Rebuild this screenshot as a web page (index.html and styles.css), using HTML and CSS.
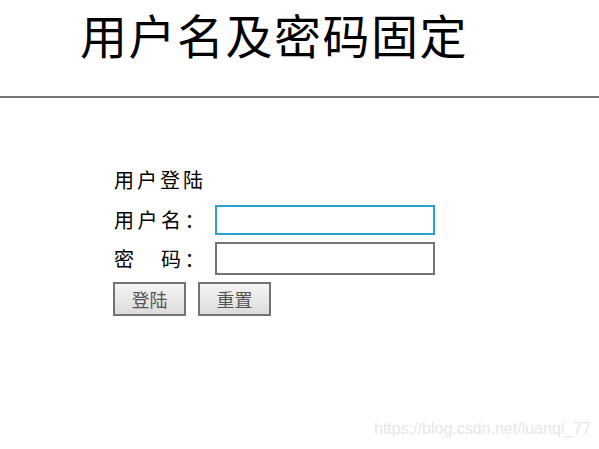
FILE: index.html
```html
<!DOCTYPE html>
<html lang="zh">
<head>
<meta charset="utf-8">
<title>用户名及密码固定</title>
<link rel="stylesheet" href="styles.css">
</head>
<body>
<header class="header">
  <h1 class="title">用户名及密码固定</h1>
</header>
<main class="login">
  <div class="login-title">用户登陆</div>
  <div class="row">
    <label class="label" for="u">用户名：</label>
    <input id="u" class="field focused" type="text">
  </div>
  <div class="row last">
    <label class="label" for="p">密　码：</label>
    <input id="p" class="field tall" type="password">
  </div>
  <div class="buttons">
    <button class="btn" type="button">登陆</button>
    <button class="btn" type="button">重置</button>
  </div>
</main>
<div class="watermark">https://blog.csdn.net/luanqi_77</div>
</body>
</html>
```

FILE: styles.css
```css
html, body {
  margin: 0;
  padding: 0;
  background: #fff;
  width: 599px;
  height: 449px;
  overflow: hidden;
  font-family: "Noto Sans CJK SC", "Liberation Serif", serif;
  color: #000;
}
.header {
  box-sizing: border-box;
  height: 98px;
  border-bottom: 2px solid #777;
}
.title {
  margin: 0;
  padding: 6px 0 0 80px;
  font-size: 47px;
  font-weight: 400;
  letter-spacing: 1.5px;
  line-height: 56px;
}
.login {
  margin: 67px 0 0 113px;
  display: flex;
  flex-direction: column;
}
.login-title {
  font-size: 20px;
  letter-spacing: 3px;
  line-height: 30px;
  height: 40px;
  padding-left: 1px;
}
.row {
  display: flex;
  align-items: center;
  margin-bottom: 7px;
}
.row.last {
  margin-bottom: 7px;
}
.label {
  width: 102px;
  font-size: 20px;
  letter-spacing: 3.5px;
  padding-left: 1px;
  box-sizing: border-box;
  line-height: 30px;
}
.field {
  width: 220px;
  height: 31px;
  box-sizing: border-box;
  border: 2px solid #747474;
  margin: 0;
  padding: 0 4px;
  outline: none;
  background: #fff;
}
.field.focused {
  border-color: #2a9fdb;
  height: 30px;
}
.field.tall {
  height: 33px;
}
.buttons {
  display: flex;
  gap: 12px;
}
.btn {
  width: 73px;
  height: 34px;
  box-sizing: border-box;
  border: 2px solid #737373;
  background: linear-gradient(#f4f4f4, #dcdcdc);
  font-family: "Noto Sans CJK SC", sans-serif;
  font-size: 18px;
  color: #555;
  padding: 0;
  line-height: 1;
}
.watermark {
  position: absolute;
  left: 374px;
  top: 420px;
  font-family: "Liberation Sans", Arial, sans-serif;
  font-size: 16px;
  color: #e6e6e6;
}
```
